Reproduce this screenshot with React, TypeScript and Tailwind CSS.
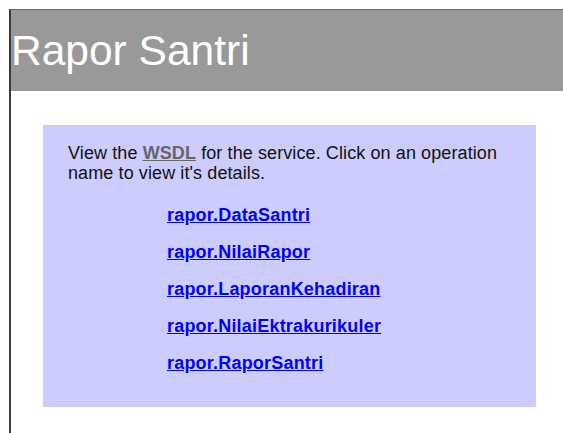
const operations = [
  "rapor.DataSantri",
  "rapor.NilaiRapor",
  "rapor.LaporanKehadiran",
  "rapor.NilaiEktrakurikuler",
  "rapor.RaporSantri",
];

export default function App() {
  return (
    <div
      className="h-[433px] w-[563px] overflow-hidden bg-white pl-[9px] pt-[9px]"
      style={{ fontFamily: '"Liberation Sans", Arial, sans-serif' }}
    >
      <div className="h-full border-l-2 border-t border-l-[#3a3a3a] border-t-[#6a6a6a]">
        <div className="h-[81px] bg-[#999999] pt-[20px]">
          <h1 className="text-[42.5px] font-normal leading-none text-white">
            Rapor Santri
          </h1>
        </div>

        <div className="pl-[32px] pt-[34px]">
          <div className="h-[282px] w-[493px] bg-[#ccccff] pl-[25px] pr-[20px] pt-[18px]">
            <p className="text-[18px] leading-[20px] tracking-[0.1px] text-[#111]">
              View the{" "}
              <a href="#" className="font-bold text-[#666666] underline">
                WSDL
              </a>{" "}
              for the service. Click on an operation name to view it's details.
            </p>

            <ul className="mt-[22px] flex flex-col gap-[17px] pl-[99px]">
              {operations.map((op) => (
                <li key={op} className="text-[18px] leading-[20px]">
                  <a
                    href="#"
                    className="font-bold tracking-[0.2px] text-[#0000ff] underline"
                  >
                    {op}
                  </a>
                </li>
              ))}
            </ul>
          </div>
        </div>
      </div>
    </div>
  );
}
